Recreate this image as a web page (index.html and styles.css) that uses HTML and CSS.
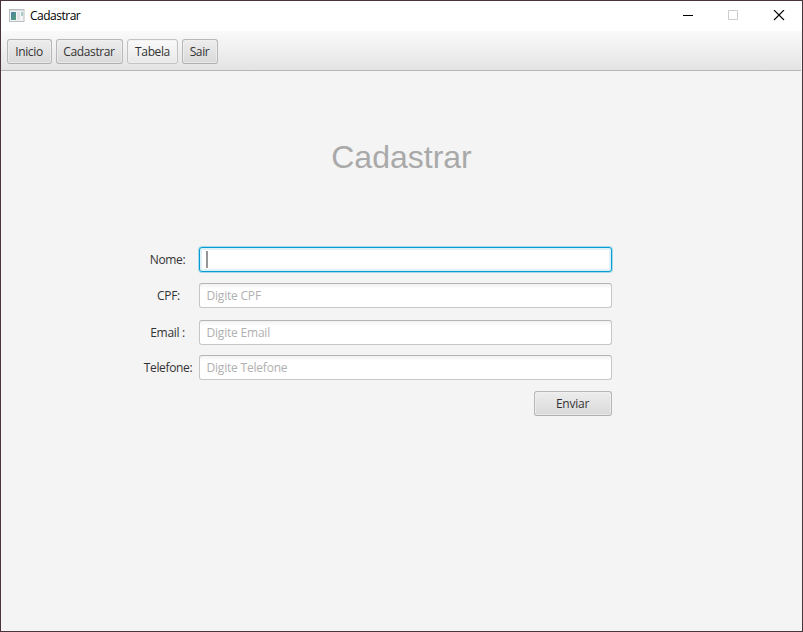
FILE: index.html
```html
<!DOCTYPE html>
<html lang="pt-BR">
<head>
<meta charset="utf-8">
<title>Cadastrar</title>
<link rel="stylesheet" href="styles.css">
</head>
<body>
<div class="window">
  <header class="titlebar">
    <svg class="app-icon" width="16" height="14" viewBox="0 0 16 14">
      <defs><linearGradient id="g" x1="0" y1="0" x2="1" y2="1"><stop offset="0" stop-color="#4b7fa5"/><stop offset="1" stop-color="#54a078"/></linearGradient></defs>
      <rect x=".5" y=".5" width="14.5" height="12" fill="#f3f4f5" stroke="#b9bec1"/>
      <path d="M1 1.5h14" stroke="#d4d8da"/>
      <rect x="2" y="3" width="5" height="8" fill="url(#g)"/>
      <rect x="8" y="3" width="3" height="8" fill="#e2e5e8"/>
      <rect x="12" y="3" width="2" height="4" fill="#a5cdc5"/>
    </svg>
    <span class="caption">Cadastrar</span>
    <svg class="controls" width="104" height="12" viewBox="0 0 104 12" fill="none">
      <path d="M0 5.5h10" stroke="#000"/>
      <path d="M45.5 .5h9v9h-9z" stroke="#ccc"/>
      <path d="M91 0l10 10M101 0l-10 10" stroke="#000" stroke-width="1.1"/>
    </svg>
  </header>
  <nav class="toolbar">
    <button class="btn inicio">Inicio</button>
    <button class="btn cadastrar">Cadastrar</button>
    <button class="btn tabela">Tabela</button>
    <button class="btn sair">Sair</button>
  </nav>
  <main class="content">
    <h1 class="heading">Cadastrar</h1>
    <form class="form">
      <div class="row"><span class="label">Nome:</span><div class="field focused"><i class="caret"></i></div></div>
      <div class="row cpf-row"><span class="label cpf">CPF:</span><div class="field"><span>Digite CPF</span></div></div>
      <div class="row email-row"><span class="label">Email :</span><div class="field"><span>Digite Email</span></div></div>
      <div class="row tel-row"><span class="label tel">Telefone:</span><div class="field"><span>Digite Telefone</span></div></div>
      <button class="btn submit" type="button">Enviar</button>
    </form>
  </main>
</div>
</body>
</html>
```
FILE: styles.css
```css
* { box-sizing: border-box; }
body { margin: 0; font: 12px/16px "Open Sans", "Noto Sans", sans-serif; letter-spacing: -0.34px; color: #333; }
.window { width: 803px; height: 632px; border: 1px solid #49343c; background: #f4f4f4; display: flex; flex-direction: column; overflow: hidden; }
.titlebar { height: 30px; background: #fff; display: flex; align-items: flex-start; padding: 7px 15px 0 8px; color: #000; }
.app-icon { margin-top: 1px; }
.caption { margin-left: 5px; letter-spacing: -0.5px; }
.controls { margin: 2px 0 0 auto; }
.toolbar { height: 40px; margin-right: 1px; padding: 8px 6px 0; display: flex; gap: 4px; background: linear-gradient(#fafafa, #e4e4e4); border-bottom: 1px solid #b5b5b5; }
.btn { height: 25px; padding: 0 1px 0 0; border: 1px solid #b7b7b7; border-bottom-color: #afafaf; border-radius: 3px; background: linear-gradient(#ededed, #d9d9d9); box-shadow: inset 0 0 0 1px #f0f0f0b0; font: inherit; line-height: 23px; color: #333; letter-spacing: -0.38px; white-space: nowrap; }
.inicio { width: 45px; }
.cadastrar { width: 67px; }
.tabela { width: 51px; padding: 0; background: linear-gradient(#fafafa, #e8e8e8); border-color: #c3c3c3; }
.sair { width: 36px; }
.content { flex: 1; display: flex; flex-direction: column; align-items: center; }
.heading { margin: 67px 0 0; font: 32px/38px "Liberation Sans", Arial, sans-serif; letter-spacing: 0; color: #a9a9a9; }
.form { width: 475px; margin: 71px 0 0 -55px; display: flex; flex-direction: column; }
.row { display: flex; height: 25px; align-items: center; }
.cpf-row { margin-top: 11px; }
.email-row { margin-top: 12px; }
.tel-row { margin-top: 10px; }
.label { width: 60px; margin-right: 2px; padding-left: 2px; text-align: center; white-space: nowrap; }
.cpf { padding-left: 4px; }
.tel { padding-left: 3px; }
.field { width: 413px; height: 25px; padding: 4px 7px; border: 1px solid #c6c6c6; border-top-color: #b5b5b5; border-radius: 3px; background: linear-gradient(#f2f2f2, #fff 5px); color: #b0b0b0; line-height: 16px; letter-spacing: -0.2px; }
.focused { padding: 3px 6px; border-color: #039ed3; background: #fff; box-shadow: 0 0 0 1px #a9d9e9, inset 0 0 0 2px #dff1f7; }
.caret { display: block; width: 2px; height: 17px; background: #969696; }
.submit { width: 78px; padding: 0; margin-top: 11px; align-self: flex-end; letter-spacing: -0.25px; }
```
